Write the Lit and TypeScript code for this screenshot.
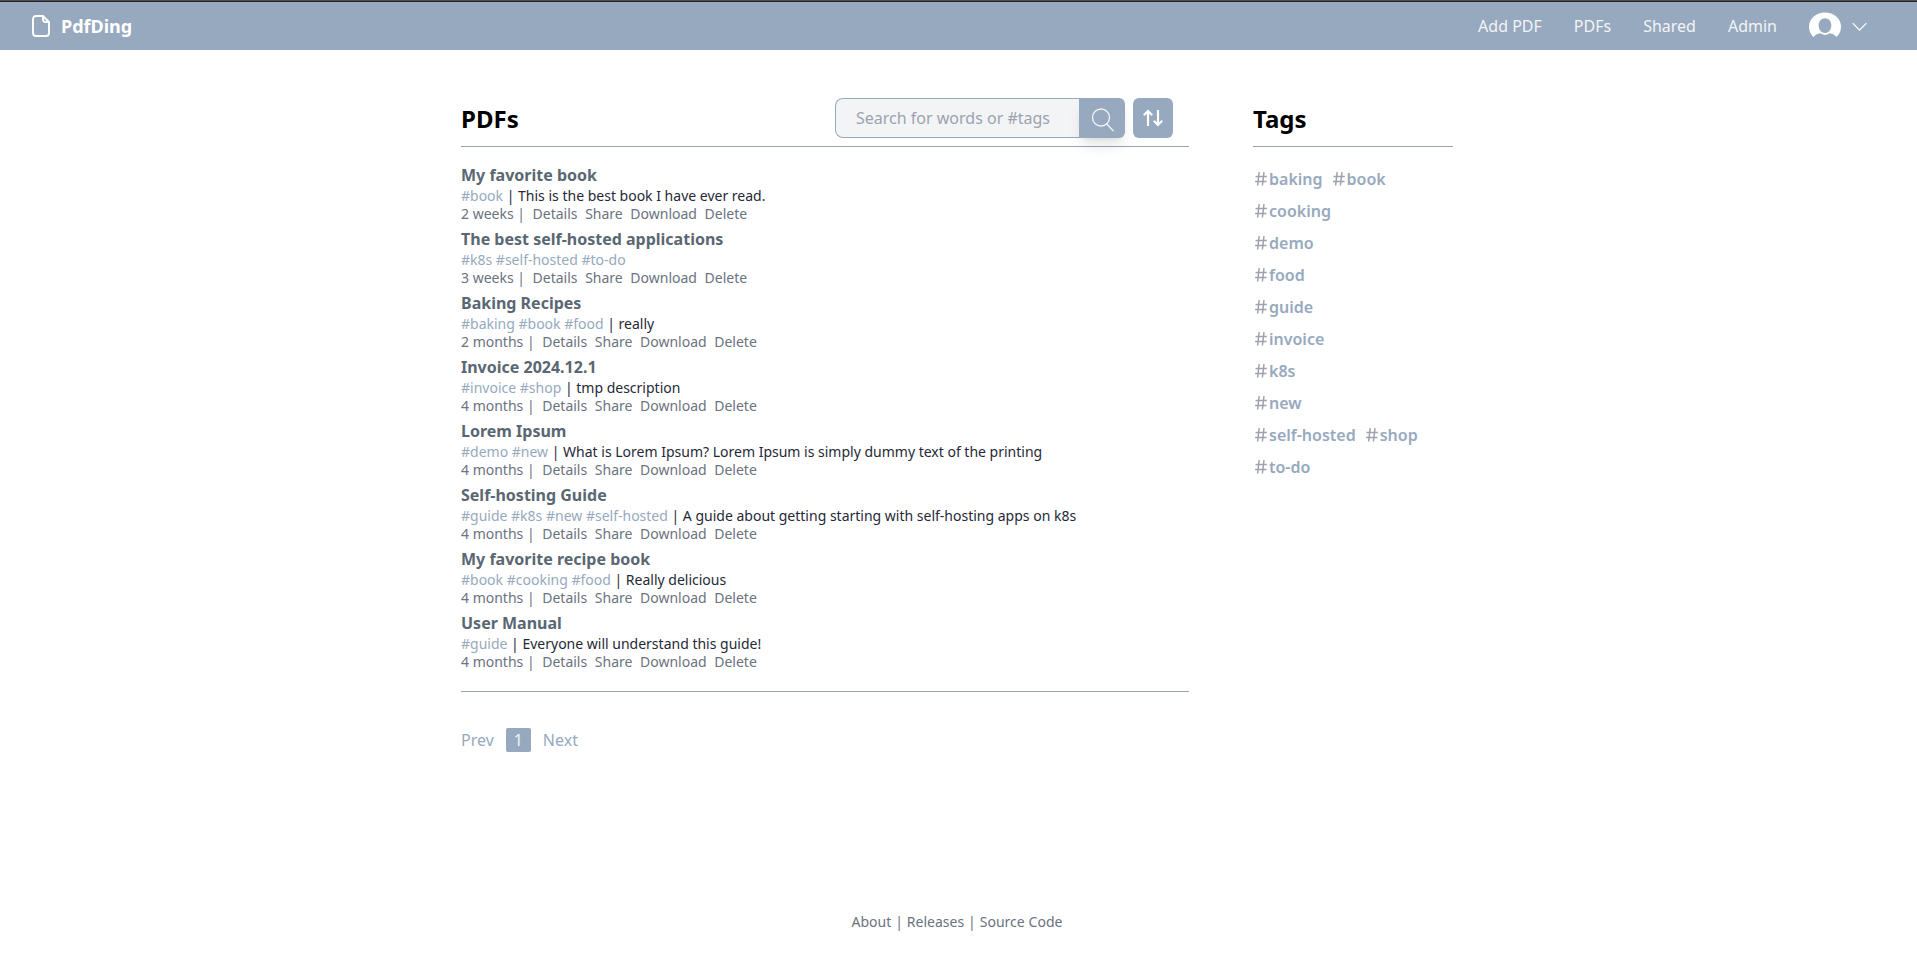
import { LitElement, html, css } from "lit";
import { customElement } from "lit/decorators.js";

interface Pdf {
  title: string;
  tags: string[];
  text?: string;
  age: string;
}

const PDFS: Pdf[] = [
  { title: "My favorite book", tags: ["book"], text: "This is the best book I have ever read.", age: "2 weeks" },
  { title: "The best self-hosted applications", tags: ["k8s", "self-hosted", "to-do"], age: "3 weeks" },
  { title: "Baking Recipes", tags: ["baking", "book", "food"], text: "really", age: "2 months" },
  { title: "Invoice 2024.12.1", tags: ["invoice", "shop"], text: "tmp description", age: "4 months" },
  { title: "Lorem Ipsum", tags: ["demo", "new"], text: "What is Lorem Ipsum? Lorem Ipsum is simply dummy text of the printing", age: "4 months" },
  { title: "Self-hosting Guide", tags: ["guide", "k8s", "new", "self-hosted"], text: "A guide about getting starting with self-hosting apps on k8s", age: "4 months" },
  { title: "My favorite recipe book", tags: ["book", "cooking", "food"], text: "Really delicious", age: "4 months" },
  { title: "User Manual", tags: ["guide"], text: "Everyone will understand this guide!", age: "4 months" },
];

const TAG_ROWS = [["baking", "book"], ["cooking"], ["demo"], ["food"], ["guide"], ["invoice"], ["k8s"], ["new"], ["self-hosted", "shop"], ["to-do"]];

@customElement("app-root")
export class AppRoot extends LitElement {
  static styles = css`
    :host { display: flex; flex-direction: column; height: 964px; background: #fff; color: #1f2937; font: 16px/24px "Noto Sans", sans-serif; }
    * { box-sizing: border-box; }
    svg { display: block; flex: none; }
    .strip { height: 2px; flex: none; background: #4d4d4d; border-bottom: 1px solid #242424; }
    .header { height: 48px; flex: none; background: #97a9be; color: #fff; display: flex; align-items: center; justify-content: space-between; padding: 0 49px 0 32px; }
    .brand { display: flex; align-items: center; gap: 11px; font-weight: 700; font-size: 18px; }
    .nav { display: flex; align-items: center; gap: 32px; color: #f3f4f6; }
    .user { display: flex; align-items: center; gap: 11px; }
    .main { display: flex; gap: 64px; padding: 48px 0 0 461px; flex: none; }
    .list { width: 728px; }
    .tags { width: 200px; }
    .bar { height: 49px; display: flex; justify-content: space-between; border-bottom: 1px solid #9ca3af; padding-right: 16px; }
    .heading { font-size: 24px; line-height: 32px; font-weight: 700; color: #000; margin: 5px 0 0; }
    .tools { display: flex; gap: 8px; }
    .search { display: flex; height: 40px; }
    .field { width: 244px; border: 1px solid #97a9be; border-right: 0; border-radius: 8px 0 0 8px; background: #f3f4f6; color: #9ca3af; padding: 7px 20px; white-space: nowrap; }
    .go { width: 46px; background: #97a9be; border-radius: 0 6px 6px 0; display: flex; align-items: center; justify-content: center; padding: 4px 0 0 1px; box-shadow: 0 10px 15px -3px rgba(0,0,0,.1), 0 4px 6px -4px rgba(0,0,0,.1); }
    .sort { width: 40px; height: 40px; background: #97a9be; border-radius: 6px; display: flex; align-items: center; justify-content: center; }
    .items { padding: 16px 0; border-bottom: 1px solid #9ca3af; }
    .item { height: 64px; font-size: 14px; line-height: 18px; white-space: pre; }
    .title { font-size: 16px; line-height: 24px; font-weight: 700; color: #5a6773; }
    .line { color: #1f2937; }
    .tag { color: #97a9be; }
    .meta { color: #6b7280; display: flex; gap: 7.6px; }
    .pager { display: flex; align-items: center; margin-top: 36px; color: #97a9be; gap: 12px; }
    .page { width: 25px; height: 24px; background: #97a9be; color: #f3f4f6; border-radius: 2px; text-align: center; }
    .cloud { padding-top: 16px; }
    .row { display: flex; gap: 8px; height: 32px; align-items: center; font-weight: 600; color: #97a9be; }
    .label { display: flex; align-items: center; }
    .footer { margin-top: auto; padding: 0 3px 32px 0; text-align: center; font-size: 14px; line-height: 20px; word-spacing: .3px; color: #6b7280; }
  `;

  render() {
    return html`
      <div class="strip"></div>
      <header class="header">
        <div class="brand">
          <svg width="18" height="22" viewBox="0 0 18 22" fill="none" stroke="#fff" stroke-width="1.9"><path d="M11 1H4A3 3 0 0 0 1 4v14A3 3 0 0 0 4 21h10a3 3 0 0 0 3-3V7z"/><path d="M11 1v3.500A2.500 2.500 0 0 0 13.500 7H17"/></svg>
          <span>PdfDing</span>
        </div>
        <nav class="nav">
          <span>Add PDF</span><span>PDFs</span><span>Shared</span><span>Admin</span>
          <div class="user">
            <svg width="32" height="32" viewBox="0 0 32 32"><path fill="#fff" fill-rule="evenodd" d="M4.500 27A16 14.500 0 1 1 27.500 27C26 25 24 24 20.500 23.300Q16 26.500 11.500 23.300C8 24 6 25 4.500 27zM16 8.300C12.300 8.300 9.700 11.300 9.700 15.600S12.300 23.100 16 23.100 22.300 19.900 22.300 15.600 19.700 8.300 16 8.300z"/></svg>
            <svg width="16" height="16" viewBox="0 0 16 16" fill="none" stroke="#fff" stroke-width="1.200"><path d="M.7 5.200L7.500 12.200L14.400 5.200"/></svg>
          </div>
        </nav>
      </header>
      <main class="main">
        <section class="list">
          <div class="bar">
            <h1 class="heading">PDFs</h1>
            <div class="tools">
              <div class="search">
                <div class="field">Search for words or #tags</div>
                <div class="go"><svg width="24" height="24" viewBox="0 0 24 24" fill="none" stroke="#f3f4f6" stroke-width="1.300"><circle cx="10" cy="9.500" r="8.500"/><path d="M15.600 15.800L22.500 23"/></svg></div>
              </div>
              <div class="sort"><svg width="20" height="18" viewBox="0 0 20 18" fill="none" stroke="#fff" stroke-width="2.200"><path d="M5 17V2M.8 6.200L5 2l4.200 4.200M15 1v15M10.800 11.800L15 16l4.200-4.200"/></svg></div>
            </div>
          </div>
          <div class="items">${PDFS.map(p => html`
            <div class="item"><div class="title">${p.title}</div><div class="line"><span class="tag">${p.tags.map(t => "#" + t).join(" ")}</span>${p.text ? " | " + p.text : ""}</div><div class="meta"><span>${p.age} |</span><span>Details</span><span>Share</span><span>Download</span><span>Delete</span></div></div>`)}
          </div>
          <div class="pager"><span>Prev</span><span class="page">1</span><span>Next</span></div>
        </section>
        <aside class="tags">
          <div class="bar"><h2 class="heading">Tags</h2></div>
          <div class="cloud">${TAG_ROWS.map(r => html`<div class="row">${r.map(t => html`<span class="label"><svg width="16" height="16" viewBox="0 0 16 16" fill="none" stroke="#9ca3af" stroke-width="1.500"><path d="M6.200 1.200L4.600 14.500M11 1.200L9.400 14.500M2.500 5.500H13.800M2 10.500H13.500"/></svg>${t}</span>`)}</div>`)}</div>
        </aside>
      </main>
      <footer class="footer">About | Releases | Source Code</footer>
    `;
  }
}
